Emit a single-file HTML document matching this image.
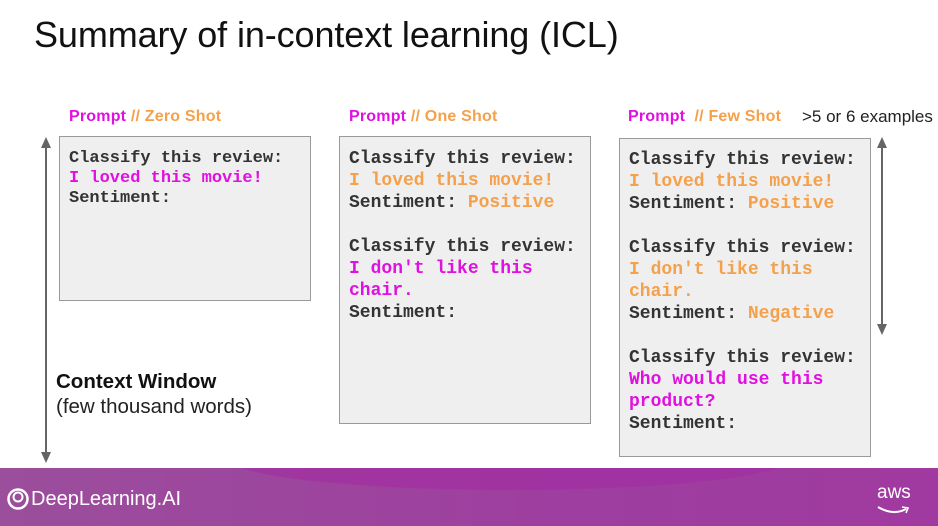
<!DOCTYPE html>
<html><head><meta charset="utf-8"><style>
*{margin:0;padding:0;box-sizing:border-box}
body{width:938px;height:526px;background:#fff;position:relative;overflow:hidden;font-family:"Liberation Sans",sans-serif;color:#222}
.t{position:absolute;left:34px;top:14px;font-size:36px;color:#111;letter-spacing:-0.1px}
.lab{position:absolute;font-size:16px;font-weight:bold;white-space:nowrap;letter-spacing:0.2px}
.m{color:#e010e0}.o{color:#f5a04a}
.box{position:absolute;background:#efeff0;border:1px solid #9a9a9a;font-family:"Liberation Mono",monospace;font-weight:bold;white-space:pre;color:#333}
.z{left:59px;top:136px;width:252px;height:165px;font-size:17px;line-height:20px;padding:12px 0 0 9px}
.b2{font-size:18px;line-height:22px;padding:11px 0 0 9px}
.arr{position:absolute;width:2px;background:#666}
.foot{position:absolute;left:0;top:468px;width:938px;height:58px;background:linear-gradient(90deg,#9b4e9c,#9e3ea0 60%,#a03aa0);overflow:hidden}
</style></head><body>
<div class="t">Summary of in-context learning (ICL)</div>
<div class="lab" style="left:69px;top:108px"><span class="m">Prompt</span> <span class="o">// Zero Shot</span></div>
<div class="lab" style="left:349px;top:108px"><span class="m">Prompt</span> <span class="o">// One Shot</span></div>
<div class="lab" style="left:628px;top:108px"><span class="m">Prompt</span> <span class="o">&nbsp;// Few Shot</span></div>
<div style="position:absolute;left:802px;top:107px;font-size:17px;color:#222">&gt;5 or 6 examples</div>
<div class="box z">Classify this review:
<span class="m">I loved this movie!</span>
Sentiment:</div>
<div class="box b2" style="left:339px;top:136px;width:252px;height:288px">Classify this review:
<span class="o">I loved this movie!</span>
Sentiment: <span class="o">Positive</span>

Classify this review:
<span class="m">I don't like this
chair.</span>
Sentiment:</div>
<div class="box b2" style="left:619px;top:138px;width:252px;height:319px;padding-top:10px">Classify this review:
<span class="o">I loved this movie!</span>
Sentiment: <span class="o">Positive</span>

Classify this review:
<span class="o">I don't like this
chair.</span>
Sentiment: <span class="o">Negative</span>

Classify this review:
<span class="m">Who would use this
product?</span>
Sentiment:</div>
<div class="arr" style="left:45px;top:146px;height:306px"></div>
<svg style="position:absolute;left:40px;top:137px" width="12" height="326"><path d="M6 0L1 11H11Z" fill="#666"/><path d="M6 326L1 315H11Z" fill="#666"/></svg>
<div class="arr" style="left:881px;top:146px;height:180px"></div>
<svg style="position:absolute;left:876px;top:137px" width="12" height="198"><path d="M6 0L1 11H11Z" fill="#666"/><path d="M6 198L1 187H11Z" fill="#666"/></svg>
<div style="position:absolute;left:56px;top:370px;font-size:20.5px;font-weight:bold;color:#111">Context Window</div>
<div style="position:absolute;left:56px;top:395px;font-size:20.5px;color:#222">(few thousand words)</div>
<div class="foot">
<div style="position:absolute;left:230px;top:-40px;width:560px;height:62px;border-radius:50%;background:#a32ca2;opacity:.6"></div>
<svg style="position:absolute;left:7px;top:20px" width="22" height="22"><circle cx="11" cy="11" r="9.5" fill="none" stroke="#fff" stroke-width="2.5"/><circle cx="11" cy="9" r="4.5" fill="none" stroke="#fff" stroke-width="2"/></svg>
<div style="position:absolute;left:31px;top:20px;font-size:20px;color:#fff">DeepLearning.AI</div>
<div style="position:absolute;left:877px;top:14px;font-size:19px;color:#fff">aws</div>
<svg style="position:absolute;left:876px;top:36px" width="36" height="14"><path d="M2 3Q17 12 30 5" fill="none" stroke="#fff" stroke-width="2"/><path d="M26 3L32 4L30 9" fill="none" stroke="#fff" stroke-width="1.6"/></svg>
</div>
</body></html>
